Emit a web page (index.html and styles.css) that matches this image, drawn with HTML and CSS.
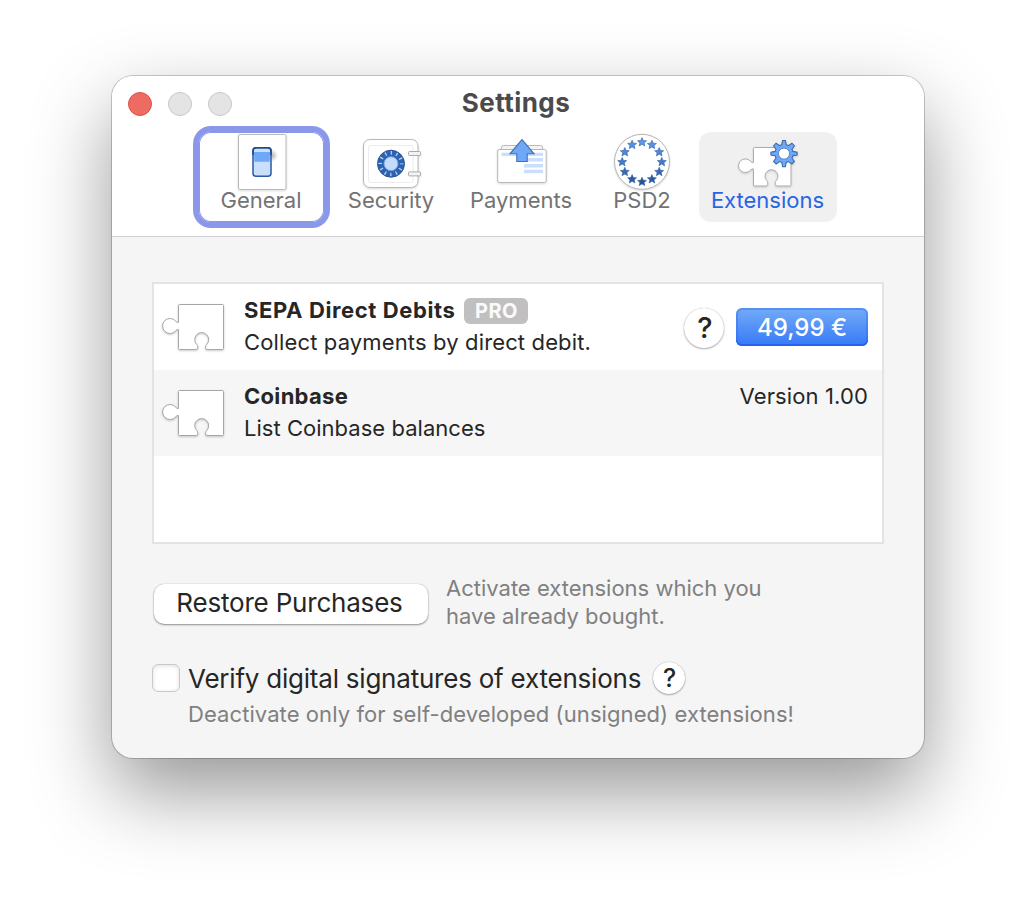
FILE: index.html
```
<!DOCTYPE html>
<html lang="en">
<head>
<meta charset="utf-8">
<title>Settings</title>
<link rel="stylesheet" href="styles.css">
</head>
<body>
<svg class="defs" width="0" height="0" aria-hidden="true">
  <defs>
    <radialGradient id="sh"><stop offset="0" stop-color="#000" stop-opacity=".28"/><stop offset="1" stop-color="#000" stop-opacity="0"/></radialGradient>
    <path id="star" d="M0-4.6 1.3-1.6 4.5-1.4 2.1.7 2.8 3.8 0 2.1-2.8 3.8-2.1.7-4.5-1.4-1.3-1.6Z"/>
    <path id="piece" d="M17.5 2.5H60.5Q61.5 2.5 61.5 3.5V46.5Q61.5 47.5 60.5 47.5H45Q43.6 47.5 43.6 46V44.8Q43.6 43.6 44.6 42.6A7 7 0 1 0 34.8 42.6Q35.8 43.6 35.8 44.8V46Q35.8 47.5 34.4 47.5H17.5Q16.5 47.5 16.5 46.5V27.6Q15 26.9 14 28.6A7.5 7.5 0 1 1 14 19.4Q15 21.1 16.5 20.4V3.5Q16.5 2.5 17.5 2.5Z"/>
  </defs>
</svg>
<main class="window">
  <header class="toolbar">
    <div class="titlebar">
      <div class="lights"><i class="light close"></i><i class="light"></i><i class="light"></i></div>
      <h1 class="title">Settings</h1>
    </div>
    <nav class="tabs">
      <a class="tab focused">
        <svg class="icon" viewBox="0 0 64 60">
          <rect x="9.5" y="2.5" width="47.5" height="55" rx="1.5" fill="#fff" stroke="#b9b9b9"/>
          <ellipse cx="43" cy="23.5" rx="6" ry="6.5" fill="url(#sh)"/>
          <rect x="24" y="15.7" width="18" height="28.6" rx="3" fill="#c9dffc" stroke="#2a5ba3" stroke-width="1.5"/>
          <path d="M24.8 20H41.2L40.6 29.7H25.4Z" fill="#6fa8f7"/>
          <path d="M24 23V19Q24 15.7 27 15.7H39Q42 15.7 42 19V23" fill="none" stroke="#234a86" stroke-width="1.6"/>
        </svg>
        <span>General</span>
      </a>
      <a class="tab">
        <svg class="icon" viewBox="0 0 64 60">
          <rect x="4.5" y="7.5" width="54.5" height="48" rx="6.5" fill="#fff" stroke="#b8b8b8"/>
          <rect x="9.5" y="13.5" width="44.5" height="37" rx="2.5" fill="none" stroke="#ececec"/>
          <circle cx="32" cy="31.7" r="13.5" fill="#2c62b4" stroke="#285599"/>
          <circle cx="32" cy="31.7" r="10.8" fill="none" stroke="#c5d9f5" stroke-width="3.6" stroke-dasharray="1.2 4.455" stroke-dashoffset=".6"/>
          <circle cx="32" cy="31.7" r="7" fill="#c3dbfc" stroke="#769fd9"/>
          <rect x="49.5" y="19.5" width="12" height="4" rx="1" fill="#f3f3f3" stroke="#aaa"/>
          <rect x="49.5" y="39.9" width="12" height="4" rx="1" fill="#f3f3f3" stroke="#aaa"/>
        </svg>
        <span>Security</span>
      </a>
      <a class="tab">
        <svg class="icon" viewBox="0 0 64 60">
          <path d="M12.5 17.5V15.5Q12.5 13.5 14.5 13.5H51.5Q53.5 13.5 53.5 15.5V17.5" fill="#f3f3f3" stroke="#bbb"/>
          <rect x="8.7" y="17.5" width="48.5" height="33" rx="1.5" fill="#fff" stroke="#b8b8b8"/>
          <path d="M12.5 20.7H54V24H12.5ZM35 26H54V29.6H35ZM35 32H54V35.6H35ZM35 37.7H54V41.2H35Z" fill="#c9dffd"/>
          <path d="M33 7.6 45 21.8H38.2V29.5H27.8V21.8H21Z" fill="#6fa8f7" stroke="#4171b0" stroke-width="1.1"/>
        </svg>
        <span>Payments</span>
      </a>
      <a class="tab">
        <svg class="icon" viewBox="0 0 64 60">
          <circle cx="32" cy="29.8" r="27.5" fill="#fff" stroke="#b5b5b5"/>
          <g stroke="#315f9f" stroke-width=".6">
            <use href="#star" x="32" y="10.2" fill="#5b98ed"/><use href="#star" x="41.9" y="12.8" fill="#5592e8"/><use href="#star" x="49.2" y="20.1" fill="#4e88dc"/><use href="#star" x="51.8" y="30" fill="#437bca"/><use href="#star" x="49.2" y="39.9" fill="#366ab7"/><use href="#star" x="41.9" y="47.2" fill="#2d5ca2"/><use href="#star" x="32" y="49.8" fill="#295594"/><use href="#star" x="22.1" y="47.2" fill="#2d5ca2"/><use href="#star" x="14.8" y="39.9" fill="#366ab7"/><use href="#star" x="12.2" y="30" fill="#437bca"/><use href="#star" x="14.8" y="20.1" fill="#4e88dc"/><use href="#star" x="22.1" y="12.8" fill="#5592e8"/>
          </g>
        </svg>
        <span>PSD2</span>
      </a>
      <a class="tab selected">
        <svg class="icon" viewBox="0 0 64 60">
          <path d="M18.5 15.5H54Q55 15.5 55 16.5V53Q55 54 54 54H41Q39.3 54 39.3 52.4V50.8Q39.3 49.6 40.3 48.6A6.5 6.5 0 1 0 30.7 48.6Q31.7 49.6 31.7 50.8V52.4Q31.7 54 30 54H18.5Q17.5 54 17.5 53V37Q16 36.4 14.6 38A6.8 6.8 0 1 1 14.6 29.4Q16 31 17.5 30.4V16.5Q17.5 15.5 18.5 15.5Z" fill="#fff" stroke="#adadad"/>
          <path d="M46.6 7.9H49.4L50.2 12.1 52.4 13 55.9 10.6 58.4 13.1 56 16.6 56.9 18.8 61.1 19.6V22.4L56.9 23.2 56 25.4 58.4 28.9 55.9 31.4 52.4 29 50.2 29.9 49.4 34.1H46.6L45.8 29.9 43.6 29 40.1 31.4 37.6 28.9 40 25.4 39.1 23.2 34.9 22.4V19.6L39.1 18.8 40 16.6 37.6 13.1 40.1 10.6 43.6 13 45.8 12.1Z" transform="translate(0 .6)" fill="#6fa8f7" stroke="#3e6ba8" stroke-width="1.1"/>
          <circle cx="48" cy="21.6" r="5.6" fill="#fff" stroke="#5683bf"/>
        </svg>
        <span>Extensions</span>
      </a>
    </nav>
  </header>
  <section class="content">
    <div class="list">
      <div class="row">
        <svg class="puzzle" viewBox="0 0 64 50"><use href="#piece" fill="#fff" stroke="#a6a6a6"/></svg>
        <div class="info">
          <div class="heading"><strong class="name sepa">SEPA Direct Debits</strong><span class="pro">PRO</span></div>
          <p class="desc collect">Collect payments by direct debit.</p>
        </div>
        <button class="help large">?</button>
        <button class="buy">49,99 €</button>
      </div>
      <div class="row alt">
        <svg class="puzzle" viewBox="0 0 64 50"><use href="#piece" fill="#fff" stroke="#a6a6a6"/></svg>
        <div class="info">
          <div class="heading"><strong class="name">Coinbase</strong></div>
          <p class="desc">List Coinbase balances</p>
        </div>
        <span class="version">Version 1.00</span>
      </div>
    </div>
    <div class="restore">
      <button class="push">Restore Purchases</button>
      <p class="hint">Activate extensions which you<br>have already bought.</p>
    </div>
    <div class="verify">
      <i class="checkbox"></i>
      <label class="verify-label">Verify digital signatures of extensions</label>
      <button class="help small">?</button>
    </div>
    <p class="note">Deactivate only for self-developed (unsigned) extensions!</p>
  </section>
</main>
</body>
</html>
```
FILE: styles.css
```
* { box-sizing: border-box; }
body { margin: 0; width: 1036px; height: 906px; overflow: hidden; background: #fff; font-family: Inter, "Liberation Sans", sans-serif; color: #262626; display: flex; align-items: flex-start; }
h1, p { margin: 0; }
button { border: 0; padding: 0; font-family: inherit; color: inherit; white-space: nowrap; }
.defs { position: absolute; }
.window { margin: 76px 0 0 112px; width: 812px; height: 682px; border-radius: 21px; background: #f5f5f5; box-shadow: 0 0 0 1px rgba(0,0,0,.2), 0 34px 80px rgba(0,0,0,.41); }
.toolbar { height: 161px; background: #fff; border-bottom: 1px solid #d0d0d0; border-radius: 21px 21px 0 0; }
.titlebar { height: 56px; display: grid; grid-template-columns: 120px 568px 124px; align-items: center; }
.lights { display: flex; gap: 16px; padding-left: 16px; }
.light { width: 24px; height: 24px; border-radius: 50%; background: #e4e4e4; border: 1px solid #c8c8c8; }
.close { background: #ed6b60; border-color: #d9544a; }
.title { font-size: 26px; line-height: 30px; font-weight: 700; letter-spacing: .45px; color: #4b4b4b; text-align: center; padding-bottom: 2px; white-space: nowrap; }
.tabs { display: grid; grid-template-columns: 137px 122px 138px 104px 138px; padding-left: 81px; }
.tab:last-child { margin-left: 5px; margin-right: -5px; }
.tab { height: 90px; display: flex; flex-direction: column; align-items: center; font-size: 22px; line-height: 26px; color: #737373; white-space: nowrap; border-radius: 12px; }
.icon { width: 64px; height: 60px; margin-bottom: -5px; flex: none; filter: drop-shadow(0 1px 1px rgba(0,0,0,.15)); }
.focused { box-shadow: inset 0 0 0 1px #8b98e9, 0 0 0 6px #8b98e9; margin: 0 6px; padding-right: 1px; }
.selected { background: #f0f0f0; color: #2864e4; padding-right: 1px; }
.selected .icon { margin-left: 1px; }
.content { padding: 45px 40px 0; }
.list { width: 732px; height: 262px; background: #fff; border: 2px solid #e3e3e3; }
.row { height: 86px; display: flex; padding: 0 14px 0 8px; }
.alt { background: #f6f6f6; }
.puzzle { width: 64px; height: 50px; margin: 18px 18px 0 0; filter: drop-shadow(0 1px 1px rgba(0,0,0,.2)); flex: none; }
.info { flex: 1; padding-top: 12px; white-space: nowrap; }
.heading { display: flex; height: 28px; align-items: center; }
.name { font-size: 22px; line-height: 28px; letter-spacing: .3px; }
.sepa { letter-spacing: .61px; }
.pro { width: 64px; height: 26px; margin: 2px 0 0 9px; border-radius: 6px; background: #c0c0c0; color: #fafafa; font-size: 20px; line-height: 26px; font-weight: 700; letter-spacing: .5px; text-align: center; }
.desc { font-size: 22px; line-height: 28px; padding-top: 4px; letter-spacing: .03px; }
.collect { letter-spacing: .14px; }
.help { border-radius: 50%; background: #fff; text-align: center; font-weight: 500; box-shadow: 0 0 1px rgba(0,0,0,.35), 0 1px 2px rgba(0,0,0,.3); }
.large { width: 40px; height: 40px; margin: 24px 12px 0 0; padding-left: 2px; font-size: 29px; line-height: 40px; }
.buy { width: 132px; height: 38px; margin-top: 24px; padding-top: 1px; border-radius: 6px; background: linear-gradient(#73abf8, #3679f7); box-shadow: inset 0 -2px 0 #2a60f2, inset 0 0 0 2px rgba(45,105,240,.4); color: #fff; font-size: 24px; line-height: 38px; font-weight: 500; }
.version { font-size: 22px; line-height: 28px; padding-top: 12px; letter-spacing: .12px; white-space: nowrap; }
.restore { display: flex; padding-top: 30px; }
.push { width: 274px; height: 40px; margin: 10px 18px 0 2px; padding: 0 3px 2px 0; border-radius: 10px; background: #fff; font-size: 26px; line-height: 38px; letter-spacing: -.2px; box-shadow: 0 0 1px rgba(0,0,0,.35), 0 1px 2px rgba(0,0,0,.4); }
.hint { font-size: 22px; line-height: 28px; color: #808080; white-space: nowrap; }
.verify { display: flex; align-items: center; height: 34px; margin-top: 31px; white-space: nowrap; }
.checkbox { width: 28px; height: 28px; border: 1px solid #c9c9c9; border-radius: 6px; background: #fff; box-shadow: inset 0 1px 4px rgba(0,0,0,.13); flex: none; }
.verify-label { width: 464px; padding: 1px 0 0 8px; font-size: 26px; line-height: 32px; letter-spacing: -.22px; }
.small { width: 32px; height: 32px; margin-left: 9px; padding-left: 1px; font-size: 25px; line-height: 32px; }
.note { padding: 5px 0 0 36px; font-size: 22px; line-height: 28px; letter-spacing: .08px; color: #808080; white-space: nowrap; }
```
